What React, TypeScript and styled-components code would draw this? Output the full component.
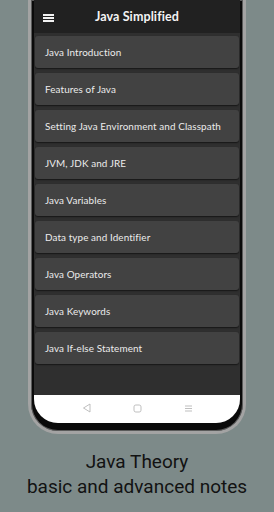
import { createGlobalStyle, styled } from 'styled-components';

const topics = [
  'Java Introduction',
  'Features of Java',
  'Setting Java Environment and Classpath',
  'JVM, JDK and JRE',
  'Java Variables',
  'Data type and Identifier',
  'Java Operators',
  'Java Keywords',
  'Java If-else Statement',
];

const GlobalStyle = createGlobalStyle`
  html, body {
    margin: 0;
    padding: 0;
    background: #7d8a89;
  }
  body {
    width: 274px;
    height: 512px;
    overflow: hidden;
  }
`;

export default function App() {
  return (
    <>
      <GlobalStyle />
      <Styled.Page>
        <Styled.Phone>
          <Styled.Screen>
            <Styled.Header>
              <Styled.Burger>
                <span />
                <span />
                <span />
              </Styled.Burger>
              <Styled.Title>Java Simplified</Styled.Title>
            </Styled.Header>
            <Styled.List>
              {topics.map(t => (
                <Styled.Card key={t}>{t}</Styled.Card>
              ))}
            </Styled.List>
            <Styled.NavBar>
              <svg width="9" height="10" viewBox="0 0 9 10">
                <path d="M8 1 L1.5 5 L8 9 Z" fill="none" stroke="#b8b8b8" strokeWidth="0.9" strokeLinejoin="round" />
              </svg>
              <svg width="9" height="9" viewBox="0 0 9 9">
                <rect x="1" y="1" width="7" height="7" rx="1.8" fill="none" stroke="#b8b8b8" strokeWidth="0.9" />
              </svg>
              <svg width="9" height="9" viewBox="0 0 9 9">
                <path d="M1 2 H8 M1 4.5 H8 M1 7 H8" stroke="#b8b8b8" strokeWidth="0.9" />
              </svg>
            </Styled.NavBar>
          </Styled.Screen>
        </Styled.Phone>
        <Styled.Caption>
          Java Theory
          <br />
          basic and advanced notes
        </Styled.Caption>
      </Styled.Page>
    </>
  );
}

const Styled = {
  Page: styled.div`
    width: 274px;
    height: 512px;
    display: flex;
    flex-direction: column;
    align-items: center;
  `,
  Phone: styled.div`
    width: 206px;
    background: #0a0a0a;
    border: 3px solid #a3a3a3;
    border-top: none;
    border-radius: 0 0 30px 30px;
    padding: 0 3px 8px 3px;
    box-shadow: inset 0 0 0 1px #5a5a5a;
    margin-left: 0;
  `,
  Screen: styled.div`
    background: #2f2f2f;
    border-radius: 0 0 24px 24px;
    overflow: hidden;
    display: flex;
    flex-direction: column;
  `,
  Header: styled.div`
    height: 33px;
    background: #212121;
    display: flex;
    align-items: center;
    justify-content: center;
    position: relative;
  `,
  Burger: styled.div`
    position: absolute;
    left: 9px;
    top: 14px;
    width: 11px;
    display: flex;
    flex-direction: column;
    gap: 1.5px;
    span {
      height: 1.5px;
      background: #f2f2f2;
    }
  `,
  Title: styled.div`
    font-family: 'Lato', sans-serif;
    font-weight: 700;
    font-size: 12.5px;
    color: #f4f4f4;
    letter-spacing: 0.1px;
  `,
  List: styled.div`
    display: flex;
    flex-direction: column;
    gap: 5px;
    padding: 3px 1px 31px 1px;
  `,
  Card: styled.div`
    height: 32px;
    background: #424242;
    border-radius: 3px;
    box-shadow: 0 1px 1.5px rgba(0, 0, 0, 0.55);
    display: flex;
    align-items: center;
    padding-left: 10px;
    font-family: 'Lato', sans-serif;
    font-size: 9.9px;
    color: #ececec;
    letter-spacing: 0.1px;
  `,
  NavBar: styled.div`
    height: 26px;
    background: #ffffff;
    display: flex;
    align-items: center;
    justify-content: center;
    gap: 42px;
    padding-bottom: 2px;
  `,
  Caption: styled.div`
    margin-top: 15px;
    font-family: 'Roboto', sans-serif;
    font-size: 19px;
    line-height: 25px;
    color: #121212;
    text-align: center;
  `,
};
